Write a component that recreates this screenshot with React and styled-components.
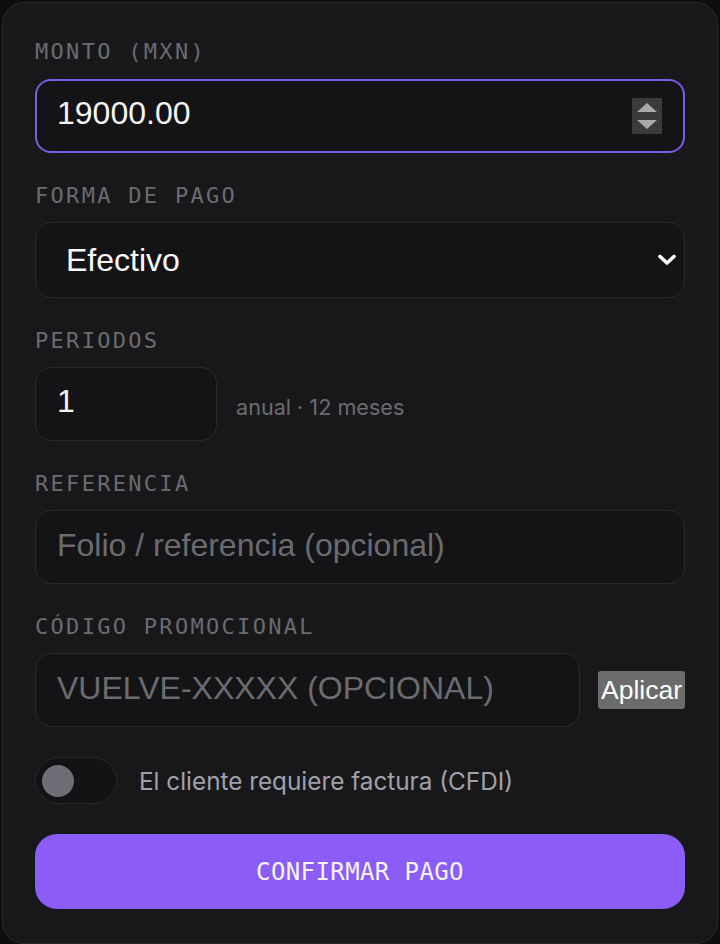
import React from "react";
import styled, { createGlobalStyle } from "styled-components";

const GlobalStyle = createGlobalStyle`
  html, body {
    margin: 0;
    padding: 0;
    background: #0e0e10;
  }
  body {
    padding: 2px;
    font-family: "Liberation Sans", Arial, sans-serif;
  }
  * {
    box-sizing: border-box;
  }
`;

const Card = styled.form`
  width: 716px;
  background: #18181b;
  border: 1px solid #2a2a2e;
  border-radius: 22px;
  padding: 36px 32px 34px;
  display: flex;
  flex-direction: column;
  gap: 30px;
`;

const Field = styled.div`
  display: flex;
  flex-direction: column;
  gap: ${(p) => p.$gap || 13}px;
`;

const Label = styled.label`
  font-family: "DejaVu Sans Mono", monospace;
  font-size: 22px;
  line-height: 26px;
  letter-spacing: 2.3px;
  color: #6b6b70;
  text-transform: uppercase;
`;

const Box = styled.div`
  display: flex;
  align-items: center;
  height: ${(p) => (p.$tall ? 76 : 74)}px;
  width: ${(p) => p.$width || "100%"};
  flex: ${(p) => (p.$grow ? 1 : "none")};
  background: #141417;
  border: ${(p) => (p.$focused ? "2px solid #7f5ae6" : "1px solid #2a2a2e")};
  border-radius: 16px;
  padding: 0 ${(p) => (p.$focused ? 21 : 6)}px 0 ${(p) => p.$left || 21}px;
`;

const TextInput = styled.input`
  flex: 1;
  min-width: 0;
  height: 100%;
  background: transparent;
  border: none;
  outline: none;
  padding: 0 0 ${(p) => p.$lift || 3}px;
  font-family: "Liberation Sans", Arial, sans-serif;
  font-size: 32px;
  color: #f4f4f5;

  &::placeholder {
    color: #6b6b70;
  }
`;

const Select = styled.select`
  flex: 1;
  height: 100%;
  appearance: none;
  background: transparent;
  border: none;
  outline: none;
  padding: 0;
  font-family: "Liberation Sans", Arial, sans-serif;
  font-size: 32px;
  color: #fafafa;
`;

const Spinner = styled.span`
  width: 30px;
  height: 36px;
  background: #3b3b3d;
  display: flex;
  flex-direction: column;
  align-items: center;
  justify-content: center;
  gap: 8px;
`;

const Tri = styled.span`
  width: 0;
  height: 0;
  border-left: 10px solid transparent;
  border-right: 10px solid transparent;
  ${(p) =>
    p.$down ? "border-top: 9px solid #a9a9ab;" : "border-bottom: 9px solid #a9a9ab;"}
`;

const Row = styled.div`
  display: flex;
  align-items: center;
  gap: ${(p) => p.$gap || 18}px;
`;

const Hint = styled.span`
  font-family: Inter, "Noto Sans", sans-serif;
  font-size: 21.6px;
  color: #6b6b70;
  margin-top: 6px;
`;

const ApplyButton = styled.button`
  height: 38px;
  padding: 0 3px;
  background: #6b6b6b;
  color: #ffffff;
  border: none;
  border-radius: 3px;
  font-family: "Liberation Sans", Arial, sans-serif;
  font-size: 26.5px;
`;

const Toggle = styled.span`
  width: 82px;
  height: 47px;
  border-radius: 24px;
  background: #131316;
  border: 1.5px solid #27272a;
  display: flex;
  align-items: center;
  padding-left: 6px;
`;

const Knob = styled.span`
  width: 32px;
  height: 32px;
  border-radius: 50%;
  background: #6e6e76;
`;

const ToggleText = styled.span`
  font-family: Inter, "Noto Sans", sans-serif;
  font-size: 24.3px;
  color: #a1a1aa;
`;

const Confirm = styled.button`
  height: 75px;
  width: 100%;
  border: none;
  border-radius: 22px;
  background: #8b5cf6;
  color: #f5f3ff;
  font-family: "DejaVu Sans Mono", monospace;
  font-size: 24px;
  letter-spacing: 0.4px;
`;

function Chevron() {
  return (
    <svg width="22" height="14" viewBox="0 0 22 14">
      <polyline
        points="4,3.5 11,10 18,3.5"
        fill="none"
        stroke="#ffffff"
        strokeWidth="3.6"
        strokeLinecap="round"
        strokeLinejoin="round"
      />
    </svg>
  );
}

export default function App() {
  return (
    <>
      <GlobalStyle />
      <Card onSubmit={(e) => e.preventDefault()}>
        <Field $gap={14}>
          <Label>Monto (MXN)</Label>
          <Box $focused $left={20}>
            <TextInput defaultValue="19000.00" $lift={6} />
            <Spinner>
              <Tri />
              <Tri $down />
            </Spinner>
          </Box>
        </Field>

        <Field>
          <Label>Forma de pago</Label>
          <Box $tall $left={30}>
            <Select defaultValue="efectivo">
              <option value="efectivo">Efectivo</option>
              <option value="tarjeta">Tarjeta</option>
              <option value="transferencia">Transferencia</option>
            </Select>
            <Chevron />
          </Box>
        </Field>

        <Field>
          <Label>Periodos</Label>
          <Row $gap={19}>
            <Box $width="182px">
              <TextInput defaultValue="1" $lift={6} />
            </Box>
            <Hint>anual · 12 meses</Hint>
          </Row>
        </Field>

        <Field>
          <Label>Referencia</Label>
          <Box>
            <TextInput placeholder="Folio / referencia (opcional)" />
          </Box>
        </Field>

        <Field>
          <Label>Código promocional</Label>
          <Row>
            <Box $grow>
              <TextInput placeholder="VUELVE-XXXXX (OPCIONAL)" />
            </Box>
            <ApplyButton type="button">Aplicar</ApplyButton>
          </Row>
        </Field>

        <Row $gap={22}>
          <Toggle>
            <Knob />
          </Toggle>
          <ToggleText>El cliente requiere factura (CFDI)</ToggleText>
        </Row>

        <Confirm type="submit">CONFIRMAR PAGO</Confirm>
      </Card>
    </>
  );
}
